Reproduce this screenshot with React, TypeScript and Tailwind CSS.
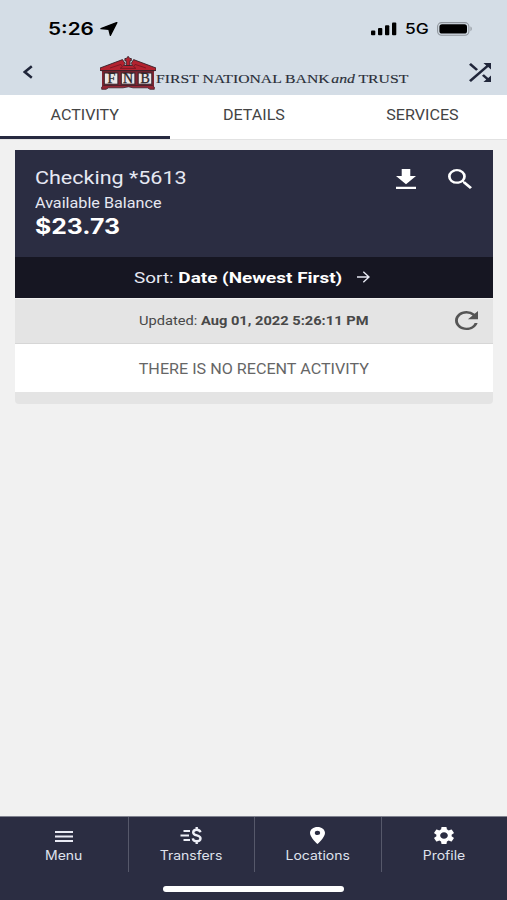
import React from "react";

type IconProps = { box: string; d: string; className: string };

function Icon({ box, d, className }: IconProps) {
  return (
    <svg viewBox={box} preserveAspectRatio="none" className={className} fill="currentColor">
      <path d={d} />
    </svg>
  );
}

const PATHS = {
  shuffle:
    "M10.59 9.17L5.41 4 4 5.41l5.17 5.17 1.42-1.41zM14.5 4l2.04 2.04L4 18.59 5.41 20 17.96 7.46 20 9.5V4h-5.5zm.33 9.41l-1.41 1.41 3.13 3.13L14.5 20H20v-5.5l-2.04 2.04-3.13-3.13z",
  download: "M19 9h-4V3H9v6H5l7 7 7-7zM5 18v2h14v-2H5z",
  search:
    "M15.5 14h-.79l-.28-.27A6.471 6.471 0 0 0 16 9.5 6.5 6.5 0 1 0 9.5 16c1.61 0 3.09-.59 4.23-1.57l.27.28v.79l5 4.99L20.49 19l-4.99-5zm-6 0C7.01 14 5 11.99 5 9.5S7.01 5 9.5 5 14 7.01 14 9.5 11.99 14 9.5 14z",
  refresh:
    "M17.65 6.35A7.958 7.958 0 0 0 12 4c-4.42 0-7.99 3.58-7.99 8s3.57 8 7.99 8c3.73 0 6.84-2.55 7.73-6h-2.08A5.99 5.99 0 0 1 12 18c-3.31 0-6-2.69-6-6s2.69-6 6-6c1.66 0 3.14.69 4.22 1.78L13 11h7V4l-2.35 2.35z",
  place:
    "M12 2C8.13 2 5 5.13 5 9c0 5.25 7 13 7 13s7-7.75 7-13c0-3.87-3.13-7-7-7zm0 9.5a2.5 2.5 0 1 1 0-5 2.5 2.5 0 0 1 0 5z",
  gear:
    "M19.14 12.94c.04-.3.06-.61.06-.94 0-.32-.02-.64-.07-.94l2.03-1.58a.49.49 0 0 0 .12-.61l-1.92-3.32a.488.488 0 0 0-.59-.22l-2.39.96c-.5-.38-1.03-.7-1.62-.94l-.36-2.54a.484.484 0 0 0-.48-.41h-3.84c-.24 0-.43.17-.47.41l-.36 2.54c-.59.24-1.13.57-1.62.94l-2.39-.96c-.22-.08-.47 0-.59.22L2.74 8.87c-.12.21-.08.47.12.61l2.03 1.58c-.05.3-.09.63-.09.94s.02.64.07.94l-2.03 1.58a.49.49 0 0 0-.12.61l1.92 3.32c.12.22.37.29.59.22l2.39-.96c.5.38 1.03.7 1.62.94l.36 2.54c.05.24.24.41.48.41h3.84c.24 0 .44-.17.47-.41l.36-2.54c.59-.24 1.13-.56 1.62-.94l2.39.96c.22.08.47 0 .59-.22l1.92-3.32c.12-.22.07-.47-.12-.61l-2.01-1.58zM12 15.6c-1.98 0-3.6-1.62-3.6-3.6s1.62-3.6 3.6-3.6 3.6 1.62 3.6 3.6-1.62 3.6-3.6 3.6z",
};

function StatusBar() {
  return (
    <div className="flex h-[50px] items-center pt-2 pl-12 pr-[34px] text-black">
      <span className="w-[52px] font-['Inter',sans-serif] text-[17px] leading-5 font-semibold whitespace-nowrap">
        <span className="inline-block origin-left scale-x-[1.22]">5:26</span>
      </span>
      <svg viewBox="0 0 18 14" className="h-[14px] w-[18px]">
        <path d="M1 6.6 16.8.6 10.4 13.3 8.9 7.3Z" fill="#000" stroke="#000" strokeWidth="1.4" strokeLinejoin="round" />
      </svg>
      <div className="ml-auto flex items-center">
        <svg viewBox="0 0 26 14" className="h-[14px] w-[26px]">
          <rect x="0" y="8.5" width="4.3" height="4.8" rx="1" />
          <rect x="7" y="6" width="4.3" height="7.3" rx="1" />
          <rect x="14" y="3.2" width="4.3" height="10.1" rx="1" />
          <rect x="21" y="0.5" width="4.3" height="12.8" rx="1" />
        </svg>
        <span className="ml-2 w-8 font-['Inter',sans-serif] text-[14.5px] leading-5 font-medium">
          <span className="inline-block origin-left scale-x-[1.2]">5G</span>
        </span>
        <svg viewBox="0 0 36 14" className="h-[14px] w-9">
          <rect x=".6" y=".6" width="31.3" height="12.6" rx="4" fill="none" stroke="#8e949b" strokeWidth="1.1" />
          <rect x="2.4" y="2.2" width="27.6" height="9.4" rx="2.6" />
          <path d="M33.5 4.6c1.6.5 1.6 4 0 4.6Z" fill="#8e949b" />
        </svg>
      </div>
    </div>
  );
}

function BankMark() {
  return (
    <svg viewBox="0 0 56 34" className="h-[34px] w-14">
      <path d="M0 12 22.5 3.6 25 7.4 23.6 9.5H32.6L31.2 7.4 33.6 3.6 56 12V14.5H0Z" fill="#b3222f" stroke="#342129" strokeWidth=".9" />
      <path d="M10 12 21 8.4 22.4 10.8 20 12.4H36L33.7 10.8 35 8.4 46 12" fill="none" stroke="#7d1824" strokeWidth="1" />
      <path d="M26.2 9.5V4.7H24.9V2.5H26.4L28.1.3 29.8 2.5H31.3V4.7H30V9.5Z" fill="#b3222f" stroke="#342129" strokeWidth=".9" />
      <rect x="2" y="14.2" width="52" height="16.4" fill="#812532" />
      <path d="M1.5 14.6H54.5" stroke="#40212a" strokeWidth="1.3" />
      <path d="M1.7 31 3.5 29.5H52.5L54.3 31V33.3H50L47.5 31.8H33L28.5 30.8 23 31.8H8.5L6 33.3H1.7Z" fill="#962635" stroke="#40212a" strokeWidth=".8" />
      <g fill="#e9e6e7" stroke="#35232b" strokeWidth="1">
        <rect x="4.3" y="17" width="13.6" height="11.2" />
        <rect x="21.3" y="17" width="13.6" height="11.2" />
        <rect x="38.2" y="17" width="13.6" height="11.2" />
      </g>
      <g className="font-['Liberation_Serif',serif]" fill="#2a2429" stroke="#2a2429" strokeWidth=".3" fontSize="14" textAnchor="middle">
        <text x="11.3" y="27.3">F</text>
        <text x="28.1" y="27.3">N</text>
        <text x="45.1" y="27.3">B</text>
      </g>
    </svg>
  );
}

function TitleBar() {
  return (
    <div className="flex h-[45px] items-start pl-[23px] pr-4 text-[#20263a]">
      <svg viewBox="0 0 10 14" className="mt-[15px] h-[14px] w-[10px]">
        <path d="M8.8 1.2 1.8 7 8.8 12.8" fill="none" stroke="currentColor" strokeWidth="2.5" />
      </svg>
      <div className="ml-[67px] flex items-start pt-[6px]">
        <BankMark />
        <span className="h-6 w-[253px] pt-[11px] font-['Liberation_Serif',serif] text-[13.5px] leading-6 font-medium whitespace-nowrap text-[#292e38] [-webkit-text-stroke:0.15px_#292e38]">
          <span className="inline-block origin-left scale-x-[1.163]">
            FIRST NATIONAL BANK<i className="ml-[1.5px]">and</i> TRUST
          </span>
        </span>
      </div>
      <Icon box="4 4 16 16" d={PATHS.shuffle} className="mt-[13px] ml-auto h-[19px] w-[22px]" />
    </div>
  );
}

function Tabs() {
  const tabs = ["ACTIVITY", "DETAILS", "SERVICES"];
  return (
    <div className="grid h-[45px] grid-cols-[170px_168px_1fr] border-b border-[#e2e2e2] bg-white text-[14px] text-[#444]">
      {tabs.map((tab, i) => (
        <div
          key={tab}
          className={
            i === 0
              ? "flex h-[44px] items-center justify-center border-b-[3px] border-[#272940]"
              : "flex h-[41px] items-center justify-center"
          }
        >
          <span className="inline-block scale-x-[1.15]">{tab}</span>
        </div>
      ))}
    </div>
  );
}

function AccountCard() {
  return (
    <section className="mx-auto mt-[10px] w-[478px] overflow-hidden rounded-b-[4px] bg-[#e4e4e4]">
      <div className="flex h-[107px] bg-[#2b2d42] pl-5 text-[#e6e8f2]">
        <div className="w-[361px] whitespace-nowrap">
          <h1 className="mt-[16px] h-6 text-[18.5px] leading-6">
            <span className="inline-block origin-left scale-x-[1.163]">Checking *5613</span>
          </h1>
          <p className="mt-[5px] h-4 text-[14px] leading-4">
            <span className="inline-block origin-left scale-x-[1.155]">Available Balance</span>
          </p>
          <p className="mt-[4px] h-6 font-['Inter',sans-serif] text-[21px] leading-6 font-bold text-white">
            <span className="inline-block origin-left scale-x-[1.18]">$23.73</span>
          </p>
        </div>
        <div className="flex items-start gap-8 pt-[19px] text-white">
          <Icon box="5 3 14 17" d={PATHS.download} className="h-5 w-5" />
          <Icon box="3 3 17.49 17.49" d={PATHS.search} className="h-5 w-6" />
        </div>
      </div>
      <div className="flex h-[41px] items-center bg-[#161622] pt-[2px] pl-[119px] text-[15.5px] text-[#e6e8f2]">
        <span className="w-[223px] whitespace-nowrap">
          <span className="inline-block origin-left scale-x-[1.22]">
            Sort: <b className="text-white">Date (Newest First)</b>
          </span>
        </span>
        <svg viewBox="0 0 13 12" className="mb-[3px] h-3 w-[13px]" fill="none" stroke="currentColor" strokeWidth="1.4">
          <path d="M0 6H12M6.3.7 12 6 6.3 11.3" />
        </svg>
      </div>
      <div className="flex h-[46px] items-center border-t border-b border-t-[#f1f1f1] border-b-[#d6d6d6] pl-[124px] text-[13px] text-[#484848]">
        <span className="w-[316px] whitespace-nowrap">
          <span className="inline-block origin-left scale-x-[1.127]">
            Updated: <b>Aug 01, 2022 5:26:11 PM</b>
          </span>
        </span>
        <Icon box="4 4 16 16" d={PATHS.refresh} className="mb-[2px] h-[19px] w-[23px] text-[#555]" />
      </div>
      <div className="flex h-12 items-center justify-center bg-white pt-[3px] text-[14px] whitespace-nowrap text-[#666]">
        <span className="inline-block scale-x-[1.153]">THERE IS NO RECENT ACTIVITY</span>
      </div>
      <div className="h-3" />
    </section>
  );
}

function MenuIcon() {
  return (
    <svg viewBox="0 0 18 11" className="mt-[4px] h-[11px] w-[18px]">
      <path d="M0 1H18M0 5.5H18M0 10H18" stroke="#e9eaf4" strokeWidth="1.8" />
    </svg>
  );
}

function TransferIcon() {
  return (
    <svg viewBox="0 0 22 17" className="h-[17px] w-[22px]" fill="none" stroke="#eef0f8" strokeWidth="1.8">
      <path d="M3.5 4H10M.5 8.5H9M3.5 13H10" />
      <path d="M20.4 5.3C20.1 3.6 18.8 2.7 16.7 2.7c-2 0-3.5.9-3.5 2.7 0 4 7.3 2 7.3 6 0 1.8-1.5 2.9-3.7 2.9-2.3 0-3.8-1-4-3M16.7 0V3M16.7 14V17" strokeWidth="2.4" />
    </svg>
  );
}

function BottomNav() {
  const items = [
    { label: "Menu", icon: <MenuIcon /> },
    { label: "Transfers", icon: <TransferIcon /> },
    { label: "Locations", icon: <Icon box="5 2 14 20" d={PATHS.place} className="h-[17px] w-[15px] text-white" /> },
    { label: "Profile", icon: <Icon box="2.6 2.4 18.8 19.2" d={PATHS.gear} className="h-[17px] w-5 text-white" /> },
  ];
  return (
    <nav className="mt-auto h-[84px] border-t border-[#80828f] bg-[#2b2d42]">
      <div className="grid h-[55px] grid-cols-[128.5px_126.5px_126.5px_1fr]">
        {items.map((item, i) => (
          <div
            key={item.label}
            className={i < 3 ? "flex flex-col items-center border-r border-[#56586a] pt-[10px]" : "flex flex-col items-center pt-[10px]"}
          >
            <div className="flex h-[19px] items-start">{item.icon}</div>
            <span className="inline-block scale-x-[1.12] font-['Inter',sans-serif] text-[12.5px] leading-[19px] text-[#dfe1ec]">{item.label}</span>
          </div>
        ))}
      </div>
      <div className="mx-auto mt-[14px] h-[6px] w-[181px] rounded-full bg-white" />
    </nav>
  );
}

export default function App() {
  return (
    <div className="flex h-[900px] w-[507px] flex-col overflow-hidden bg-[#f1f1f1] font-['Roboto',sans-serif]">
      <header className="h-[95px] bg-[#d4dde6]">
        <StatusBar />
        <TitleBar />
      </header>
      <Tabs />
      <AccountCard />
      <BottomNav />
    </div>
  );
}
